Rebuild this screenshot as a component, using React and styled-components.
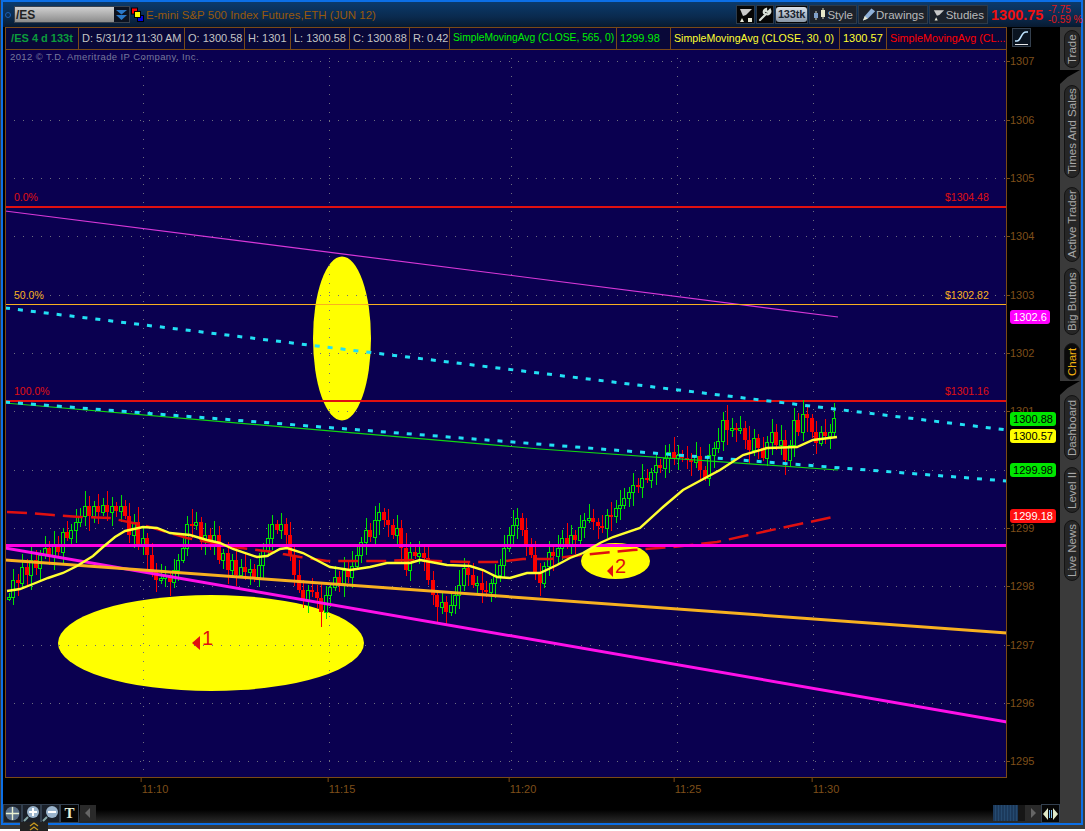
import React from "react";
import styled, { createGlobalStyle } from "styled-components";

const GlobalStyle = createGlobalStyle`
  html, body { margin: 0; padding: 0; background: #fff; }
  body { font-family: "Liberation Sans", Arial, sans-serif; }
`;

const BLUE = "#0c6fe6";
const BROWN = "#7b4a16";

// closing prices as pixel rows, one candle every 4.46px
const closes = [
  597, 580, 583, 567, 575, 560, 568, 555, 548, 556, 545, 552, 532, 538, 530, 522, 516, 506, 516, 506,
  512, 505, 512, 506, 511, 506, 516, 535, 522, 545, 538, 555, 570, 580, 578, 575, 582, 570, 560, 548,
  524, 525, 522, 540, 535, 543, 535, 560, 553, 570, 560, 575, 567, 572, 569, 577, 565, 550, 538, 524,
  530, 524, 535, 555, 575, 590, 600, 590, 592, 598, 612, 595, 587, 577, 583, 570, 577, 566, 555, 542,
  530, 537, 520, 512, 520, 525, 535, 528, 548, 570, 552, 556, 553, 558, 580, 595, 607, 602, 612, 605,
  595, 585, 568, 575, 585, 583, 590, 592, 583, 575, 565, 548, 535, 525, 518, 530, 545, 555, 572, 583,
  566, 552, 556, 548, 538, 545, 535, 540, 527, 520, 518, 522, 526, 528, 515, 516, 508, 505, 498, 492,
  485, 487, 478, 480, 472, 465, 468, 458, 452, 458, 455, 458, 460, 462, 456, 470, 478, 455, 448, 441,
  420, 430, 428, 430, 428, 440, 450, 438, 448, 458, 442, 432, 445, 440, 460, 445, 420, 432, 414, 418,
  432, 443, 432, 436, 432, 418,
];

const smaFast = "7,591 20,589 33,584 48,578 63,573 77,566 93,556 103,547 115,537 125,531 143,527 157,528 170,533 190,535 207,540 220,543 233,549 257,557 267,556 280,549 287,548 303,553 330,567 350,570 370,567 387,563 410,563 420,560 447,565 470,566 483,570 497,577 510,578 527,573 540,573 557,565 570,558 583,553 600,543 613,537 640,528 663,507 683,490 707,477 720,470 743,455 767,448 797,447 813,440 837,437";
const smaSlow = "7,512 27,513 53,515 80,517 110,518 133,523 143,525 160,530 187,538 233,547 273,552 283,554 300,557 327,561 357,561 383,561 410,560 437,561 470,562 497,562 523,559 550,559 573,556 633,550 673,547 717,542 767,531 833,517";

const priceTicks = [
  [1307, 61], [1306, 120], [1305, 178], [1304, 236], [1303, 295], [1302, 353], [1301, 411],
  [1300, 470], [1299, 528], [1298, 586], [1297, 645], [1296, 703], [1295, 761],
];
const timeGrid = [143, 329, 511, 677, 813];
const timeLabels = [["11:10", 155], ["11:15", 342], ["11:20", 523], ["11:25", 688], ["11:30", 826]];

const badges = [
  { text: "1302.6", top: 310, width: 40, bg: "#ff00ff", fg: "#fff" },
  { text: "1300.88", top: 412, width: 46, bg: "#00e600", fg: "#000" },
  { text: "1300.57", top: 429, width: 46, bg: "#ffff00", fg: "#000" },
  { text: "1299.98", top: 463, width: 46, bg: "#00e600", fg: "#000" },
  { text: "1299.18", top: 509, width: 46, bg: "#ff1010", fg: "#fff" },
];

const infoCells = [
  { text: "/ES 4 d 133t", width: 73, color: "#0c9c3c", bold: true, center: true },
  { text: "D: 5/31/12 11:30 AM", width: 106 },
  { text: "O: 1300.58", width: 60 },
  { text: "H: 1301", width: 46 },
  { text: "L: 1300.58", width: 59 },
  { text: "C: 1300.88", width: 60 },
  { text: "R: 0.42", width: 40 },
  { text: "SimpleMovingAvg (CLOSE, 565, 0)", width: 167, color: "#00f000", size: 10.3 },
  { text: "1299.98", width: 54, color: "#00f000" },
  { text: "SimpleMovingAvg (CLOSE, 30, 0)", width: 169, color: "#ffff30", size: 10.6 },
  { text: "1300.57", width: 47, color: "#ffff30" },
  { text: "SimpleMovingAvg (CL...", width: 120, color: "#ff0000", size: 10.8 },
];

const railTabs = [
  { label: "Trade", height: 38, gap: 2 },
  { notch: true, gap: 1 },
  { label: "Times And Sales", height: 93, gap: 9 },
  { label: "Active Trader", height: 75, gap: 6 },
  { label: "Big Buttons", height: 67, gap: 8 },
  { label: "Chart", height: 37, gap: 1, active: true },
  { notch: true, gap: 0 },
  { label: "Dashboard", height: 65, gap: 7 },
  { label: "Level II", height: 46, gap: 7 },
  { label: "Live News", height: 61, gap: 0 },
];

const Page = styled.div`
  width: 1085px;
  height: 831px;
  background: #fff;
  overflow: hidden;
`;

const Outer = styled.div`
  position: relative;
  width: 1085px;
  height: 829px;
  box-sizing: border-box;
  padding: 0 2px 4px 1px;
  background: #3a3a3a;
`;

const Window = styled.div`
  height: 100%;
  box-sizing: border-box;
  border: 2px solid ${BLUE};
  background: #000;
  display: flex;
  flex-direction: column;
`;

const TopBar = styled.header`
  height: 25px;
  flex: none;
  display: flex;
  align-items: center;
  background: linear-gradient(#0b3a6b, #0a2a4e 60%, #081a30);
`;

const StatusDot = styled.span`
  width: 4px;
  height: 4px;
  margin-left: 2px;
  border: 1px solid #1b5fb5;
  border-radius: 50%;
`;

const SymbolBox = styled.div`
  margin-left: 3px;
  width: 116px;
  height: 17px;
  box-sizing: border-box;
  border: 1px solid #39424f;
  background: linear-gradient(#d0d0d0, #8c8c8c);
  display: flex;
  align-items: center;
  justify-content: space-between;
  font-size: 12px;
  font-weight: bold;
  color: #222;
  padding-left: 1px;
`;

const SymbolDrop = styled.span`
  width: 15px;
  height: 15px;
  background: #0c1220;
  display: flex;
`;

const LinkIcon = styled.svg`
  margin-left: 1px;
  flex: none;
`;

const Title = styled.span`
  margin-left: 2px;
  color: #98590c;
  font-size: 11.5px;
  white-space: nowrap;
`;

const Tools = styled.div`
  margin-left: auto;
  display: flex;
  align-items: center;
  gap: 1px;
`;

const ToolButton = styled.button`
  height: 19px;
  width: ${(p) => p.$w}px;
  box-sizing: border-box;
  padding: 0 ${(p) => (p.$dark ? 0 : 3)}px;
  border: 1px solid #2c3a4a;
  background: ${(p) => (p.$dark ? "#050505" : "#1c222b")};
  color: #b9b9b9;
  font: 11.5px "Liberation Sans", Arial, sans-serif;
  display: flex;
  align-items: center;
  justify-content: ${(p) => (p.$dark ? "center" : "space-between")};
`;

const Chip = styled.span`
  padding: 0 2px;
  border-radius: 3px;
  background: linear-gradient(#d8e0e8, #8a98a8);
  color: #1a2430;
  font-size: 11px;
  font-weight: bold;
  line-height: 15px;
  letter-spacing: -0.2px;
`;

const LastPrice = styled.span`
  margin-left: 3px;
  width: 55px;
  color: #f01010;
  font-size: 14.5px;
  font-weight: bold;
  white-space: nowrap;
`;

const Change = styled.span`
  width: 35px;
  padding-left: 2px;
  box-sizing: border-box;
  color: #e01818;
  font-size: 10px;
  line-height: 10px;
  white-space: pre;
`;

const Body = styled.div`
  flex: 1;
  min-height: 0;
  display: flex;
`;

const Main = styled.div`
  width: 1057px;
  flex: none;
  display: flex;
  flex-direction: column;
  padding-left: 2px;
  box-sizing: border-box;
`;

const InfoRow = styled.div`
  height: 22px;
  flex: none;
  display: flex;
  align-items: stretch;
`;

const InfoStrip = styled.div`
  width: 1002px;
  display: flex;
  box-sizing: border-box;
  border: solid ${BROWN};
  border-width: 1px 1px 0 1px;
  background: #090838;
`;

const InfoCell = styled.div`
  width: ${(p) => p.$w}px;
  flex: none;
  box-sizing: border-box;
  padding: 0 3px;
  border-right: 1px solid ${BROWN};
  color: ${(p) => p.$color || "#c4c4c4"};
  font-size: ${(p) => p.$size || 11}px;
  font-weight: ${(p) => (p.$bold ? "bold" : "normal")};
  text-align: ${(p) => (p.$center ? "center" : "left")};
  line-height: 20px;
  white-space: nowrap;
  overflow: hidden;
  &:last-child { border-right: 0; }
`;

const CurveButton = styled.svg`
  margin: 1px 0 0 5px;
  flex: none;
`;

const ChartRow = styled.div`
  height: 729px;
  flex: none;
  display: flex;
`;

const Plot = styled.div`
  position: relative;
  width: 1002px;
  height: 729px;
  flex: none;
  background: #0a0050;
`;

const PlotSvg = styled.svg`
  display: block;
`;

const PlotFrame = styled.div`
  position: absolute;
  inset: 0;
  box-sizing: border-box;
  border: 1px solid ${BROWN};
  pointer-events: none;
`;

const Copyright = styled.span`
  position: absolute;
  left: 5px;
  top: 2px;
  color: #77779c;
  font-size: 9.5px;
  letter-spacing: 0.4px;
`;

const PriceAxis = styled.div`
  position: relative;
  flex: 1;
`;

const PriceTick = styled.span`
  position: absolute;
  left: 3px;
  transform: translateY(-50%);
  color: #7e4f1a;
  font-size: 11px;
  &::before {
    content: "";
    position: absolute;
    left: -3px;
    top: 50%;
    width: 3px;
    height: 1px;
    background: ${BROWN};
  }
`;

const Badge = styled.span`
  position: absolute;
  left: 3px;
  width: ${(p) => p.$w}px;
  height: 14px;
  border-radius: 3px;
  background: ${(p) => p.$bg};
  color: ${(p) => p.$fg};
  font-size: 11px;
  line-height: 14px;
  text-align: center;
`;

const TimeAxis = styled.div`
  position: relative;
  height: 26px;
  flex: none;
`;

const TimeLabel = styled.span`
  position: absolute;
  top: 5px;
  transform: translateX(-50%);
  color: #7e4f1a;
  font-size: 11px;
  &::before {
    content: "";
    position: absolute;
    left: -1px;
    top: -5px;
    width: 1px;
    height: 4px;
    background: ${BROWN};
  }
`;

const ScrollRow = styled.div`
  flex: 1;
  display: flex;
  align-items: stretch;
  margin-left: -2px;
  background: linear-gradient(#000 30%, #2c2c2c);
`;

const IconBox = styled.button`
  width: 19px;
  flex: none;
  padding: 0;
  box-sizing: border-box;
  border: 1px solid #33404f;
  background: ${(p) => p.$bg || "#1a2029"};
  color: #e8f0d8;
  font: bold 15px "Liberation Serif", serif;
  display: flex;
  align-items: center;
  justify-content: center;
`;

const ScrollArrow = styled.span`
  width: 16px;
  flex: none;
  margin: 1px 0 2px ${(p) => p.$left || 0}px;
  background: #2a2a2a;
  display: flex;
  align-items: center;
  justify-content: center;
`;

const ScrollThumb = styled.span`
  width: 25px;
  flex: none;
  margin: 1px 0 2px auto;
  background: repeating-linear-gradient(90deg, #1c3a5c 0 2px, #254a70 2px 3px);
`;

const ScrollGap = styled.span`
  width: 7px;
  flex: none;
  margin: 1px 0 2px;
  background: #161616;
`;

const Rail = styled.nav`
  width: 21px;
  flex: none;
  box-sizing: border-box;
  background: #3a3a3a;
  padding: 3px 1px 0 0;
  display: flex;
  flex-direction: column;
  align-items: flex-end;
`;

const RailTab = styled.div`
  height: ${(p) => p.$h}px;
  flex: none;
  width: 16px;
  margin-bottom: ${(p) => p.$gap}px;
  box-sizing: border-box;
  border: 1px solid #141414;
  border-radius: 8px;
  background: ${(p) => (p.$active ? "#0a0a0a" : "#262626")};
  color: ${(p) => (p.$active ? "#f0b010" : "#a8a8a8")};
  font-size: 11.5px;
  writing-mode: vertical-rl;
  transform: rotate(180deg);
  text-align: center;
  line-height: 14px;
  white-space: nowrap;
`;

const RailNotch = styled.div`
  align-self: stretch;
  height: 14px;
  flex: none;
  margin-bottom: ${(p) => p.$gap}px;
  background: #000;
  clip-path: polygon(0 0, 100% 0, 38% 50%, 0 100%);
`;

const DrawerTab = styled.div`
  position: absolute;
  left: 20px;
  bottom: -2px;
  width: 28px;
  height: 9px;
  background: #222;
  display: flex;
  justify-content: center;
`;

function Candles() {
  return closes.map((close, i) => {
    const x = Math.round(9 + i * 4.46);
    const open = i === 0 ? 598 : closes[i - 1];
    const up = close <= open;
    const top = Math.min(open, close);
    const bottom = Math.max(open, close);
    const high = top - (4 + ((i * 7) % 12));
    const low = bottom + (3 + ((i * 5) % 13));
    const color = up ? "#00e400" : "#fa0000";
    return (
      <g key={i} shapeRendering="crispEdges">
        <line x1={x + 0.5} x2={x + 0.5} y1={high} y2={low} stroke={color} />
        {up ? (
          <rect x={x - 1.5} y={top + 0.5} width={3} height={Math.max(bottom - top, 2)} fill="#0a0050" stroke={color} />
        ) : (
          <rect x={x - 2} y={top} width={4} height={Math.max(bottom - top, 2)} fill={color} />
        )}
      </g>
    );
  });
}

function Chart() {
  return (
    <PlotSvg width="1002" height="729" viewBox="5 49 1002 729" fontFamily="Liberation Sans, Arial, sans-serif">
      <ellipse cx="342" cy="338.5" rx="29" ry="82" fill="#ffff00" />
      <ellipse cx="211" cy="643" rx="153" ry="48" fill="#ffff00" />
      <ellipse cx="615.5" cy="561" rx="34.5" ry="18" fill="#ffff00" />

      {priceTicks.map(([p, y]) => (
        <line key={p} x1="5" x2="1007" y1={y + 0.5} y2={y + 0.5} stroke="#6d6d80" strokeDasharray="1 8" />
      ))}
      {timeGrid.map((x) => (
        <line key={x} x1={x + 0.5} x2={x + 0.5} y1="49" y2="778" stroke="#6d6d80" strokeDasharray="1 8" />
      ))}

      <line x1="5" y1="211" x2="838" y2="317" stroke="#d838d8" strokeWidth="1.2" />
      <line x1="5" x2="1007" y1="207" y2="207" stroke="#e01010" strokeWidth="2" />
      <line x1="5" x2="1007" y1="304.5" y2="304.5" stroke="#f8b020" />
      <line x1="5" x2="1007" y1="401" y2="401" stroke="#e01010" strokeWidth="2" />

      <Candles />

      <polyline points="5,403 540,449 838,470" fill="none" stroke="#10d810" strokeWidth="1.2" />
      <line x1="5" y1="308" x2="1007" y2="430" stroke="#22e0f4" strokeWidth="3" strokeDasharray="5 8" />
      <line x1="5" y1="402" x2="1007" y2="481" stroke="#22e0f4" strokeWidth="3" strokeDasharray="5 8" />
      <polyline points={smaSlow} fill="none" stroke="#e01010" strokeWidth="2.5" strokeDasharray="20 8" />
      <line x1="5" y1="548" x2="1007" y2="722" stroke="#ff10e8" strokeWidth="3" />
      <line x1="5" y1="560" x2="1007" y2="633" stroke="#f8b020" strokeWidth="3" />
      <line x1="5" y1="545.5" x2="1007" y2="545.5" stroke="#ff00e0" strokeWidth="3" />
      <polyline points={smaFast} fill="none" stroke="#ffff30" strokeWidth="2.4" />

      <text x="14" y="201" fill="#e01010" fontSize="10.5">0.0%</text>
      <text x="945" y="201" fill="#e01010" fontSize="10.5">$1304.48</text>
      <text x="14" y="299" fill="#f8b020" fontSize="10.5">50.0%</text>
      <text x="945" y="299" fill="#f8b020" fontSize="10.5">$1302.82</text>
      <text x="14" y="395" fill="#e01010" fontSize="10.5">100.0%</text>
      <text x="945" y="395" fill="#e01010" fontSize="10.5">$1301.16</text>

      <polygon points="192,643 200,636 200,650" fill="#e01010" />
      <text x="202" y="645" fill="#e01010" fontSize="20">1</text>
      <polygon points="607,571 613,565 613,577" fill="#e01010" />
      <text x="615" y="573" fill="#e01010" fontSize="20">2</text>
    </PlotSvg>
  );
}

export default function App() {
  return (
    <Page>
      <GlobalStyle />
      <Outer>
        <Window>
          <TopBar>
            <StatusDot />
            <SymbolBox>
              /ES
              <SymbolDrop>
                <svg width="15" height="15" viewBox="0 0 15 15">
                  <path d="M2 3h11L7.5 7.5zM2 8h11l-5.5 5z" fill="#2a78c8" />
                </svg>
              </SymbolDrop>
            </SymbolBox>
            <LinkIcon width="13" height="15" viewBox="0 0 13 15">
              <rect x="0.5" y="1" width="6" height="6" fill="#f00" stroke="#000" />
              <rect x="6.5" y="8.5" width="6" height="6" fill="#0000e0" stroke="#000" />
              <rect x="3.5" y="4.5" width="6" height="6" fill="#ffff00" stroke="#000" />
            </LinkIcon>
            <Title>E-mini S&amp;P 500 Index Futures,ETH (JUN 12)</Title>
            <Tools>
              <ToolButton $w={19} $dark>
                <svg width="16" height="16" viewBox="0 0 16 16">
                  <path d="M2 2h12L8 8 5 9z" fill="#c8c8c8" />
                  <path d="M4 11l2 4H2zM10 11h4v4h-4z" fill="#e8e8d8" />
                </svg>
              </ToolButton>
              <ToolButton $w={18} $dark>
                <svg width="15" height="15" viewBox="0 0 15 15">
                  <path d="M2 13l6-6M8 7a3 3 0 0 0 4-4l-2 2-2-1 0-2a3 3 0 0 0-2 4" fill="none" stroke="#d8e0d8" strokeWidth="2.2" strokeLinecap="round" />
                </svg>
              </ToolButton>
              <ToolButton $w={33} $dark>
                <Chip>133tk</Chip>
              </ToolButton>
              <ToolButton $w={48}>
                <svg width="14" height="15" viewBox="0 0 14 15">
                  <path d="M3 4v9M10 1v11" stroke="#d8d8c0" />
                  <rect x="1" y="6" width="4" height="5" fill="#7fa0c8" />
                  <rect x="8" y="3" width="4" height="7" fill="#e8e8c8" />
                </svg>
                Style
              </ToolButton>
              <ToolButton $w={70}>
                <svg width="15" height="15" viewBox="0 0 15 15">
                  <path d="M1 14l2-5 7-8 4 3-8 8z" fill="#8fb0d8" />
                  <path d="M1 14l2-5 3 3z" fill="#e8e8d0" />
                </svg>
                Drawings
              </ToolButton>
              <ToolButton $w={59}>
                <svg width="16" height="16" viewBox="0 0 16 16">
                  <path d="M1 2h13L8 8 5 9z" fill="#c8c8c8" />
                  <path d="M4 11l2 4H2z" fill="#e8e8d8" />
                </svg>
                Studies
              </ToolButton>
            </Tools>
            <LastPrice>1300.75</LastPrice>
            <Change>{"-7.75\n-0.59 %"}</Change>
          </TopBar>
          <Body>
            <Main>
              <InfoRow>
                <InfoStrip>
                  {infoCells.map((c) => (
                    <InfoCell key={c.text} $w={c.width} $color={c.color} $bold={c.bold} $center={c.center} $size={c.size}>
                      {c.text}
                    </InfoCell>
                  ))}
                </InfoStrip>
                <CurveButton width="19" height="19" viewBox="0 0 19 19">
                  <rect x="0.5" y="0.5" width="18" height="18" fill="#0a1420" stroke="#34404e" />
                  <path d="M3 13h2c4 0 4-9 9-9h2" fill="none" stroke="#bfe4ff" strokeWidth="1.6" />
                  <path d="M3 16.5h13" stroke="#e8e8e8" />
                </CurveButton>
              </InfoRow>
              <ChartRow>
                <Plot>
                  <Chart />
                  <PlotFrame />
                  <Copyright>2012 © T.D. Ameritrade IP Company, Inc.</Copyright>
                </Plot>
                <PriceAxis>
                  {/* 1300 sits fully behind the 1299.98 badge */}
                  {priceTicks.filter(([p]) => p !== 1300).map(([p, y]) => (
                    <PriceTick key={p} style={{ top: y - 49 }}>{p}</PriceTick>
                  ))}
                  {badges.map((b) => (
                    <Badge key={b.text} $w={b.width} $bg={b.bg} $fg={b.fg} style={{ top: b.top - 49 }}>
                      {b.text}
                    </Badge>
                  ))}
                </PriceAxis>
              </ChartRow>
              <TimeAxis>
                {timeLabels.map(([t, x]) => (
                  <TimeLabel key={t} style={{ left: x - 5 }}>{t}</TimeLabel>
                ))}
              </TimeAxis>
              <ScrollRow>
                <IconBox>
                  <svg width="15" height="15" viewBox="0 0 15 15">
                    <circle cx="7.5" cy="7.5" r="7" fill="#5a7088" />
                    <path d="M7.5 1v13M1 7.5h13" stroke="#e8f0d0" strokeWidth="1.4" />
                  </svg>
                </IconBox>
                <IconBox>
                  <svg width="17" height="17" viewBox="0 0 17 17">
                    <path d="M1 16l4-4" stroke="#8aa" strokeWidth="2" />
                    <circle cx="10" cy="7" r="6" fill="#9ab4cc" />
                    <path d="M10 3v8M6 7h8" stroke="#fff" strokeWidth="2" />
                  </svg>
                </IconBox>
                <IconBox>
                  <svg width="17" height="17" viewBox="0 0 17 17">
                    <path d="M1 16l4-4" stroke="#8aa" strokeWidth="2" />
                    <circle cx="10" cy="7" r="6" fill="#9ab4cc" />
                    <path d="M6 7h8" stroke="#fff" strokeWidth="2" />
                  </svg>
                </IconBox>
                <IconBox $bg="#050505">T</IconBox>
                <ScrollArrow $left={1}>
                  <svg width="6" height="10" viewBox="0 0 6 10"><path d="M5 0v10L0 5z" fill="#666" /></svg>
                </ScrollArrow>
                <ScrollThumb />
                <ScrollGap />
                <ScrollArrow>
                  <svg width="6" height="10" viewBox="0 0 6 10"><path d="M1 0v10l5-5z" fill="#666" /></svg>
                </ScrollArrow>
                <IconBox $bg="#050505">
                  <svg width="15" height="12" viewBox="0 0 15 12">
                    <path d="M5 0v12L0 6zM10 0v12l5-6z" fill="#dfe8c8" />
                    <path d="M6.5 2v8M8.5 2v8" stroke="#7fc0f0" />
                  </svg>
                </IconBox>
              </ScrollRow>
            </Main>
            <Rail>
              {railTabs.map((t, i) =>
                t.notch ? (
                  <RailNotch key={i} $gap={t.gap} />
                ) : (
                  <RailTab key={t.label} $h={t.height} $gap={t.gap} $active={t.active}>
                    {t.label}
                  </RailTab>
                )
              )}
            </Rail>
          </Body>
        </Window>
        <DrawerTab>
          <svg width="10" height="9" viewBox="0 0 10 9">
            <path d="M1 4l4-3 4 3M1 8l4-3 4 3" fill="none" stroke="#c89a20" strokeWidth="1.3" />
          </svg>
        </DrawerTab>
      </Outer>
    </Page>
  );
}
